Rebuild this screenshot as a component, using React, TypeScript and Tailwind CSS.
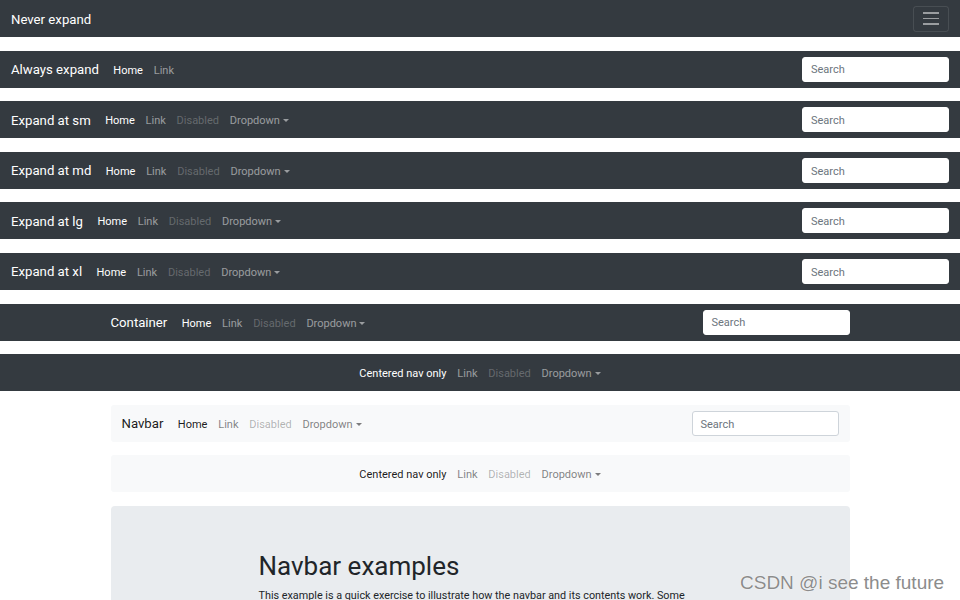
import React from 'react';

type Item = { label: string; kind: 'active' | 'link' | 'disabled' | 'dropdown' };

const full: Item[] = [
  { label: 'Home', kind: 'active' },
  { label: 'Link', kind: 'link' },
  { label: 'Disabled', kind: 'disabled' },
  { label: 'Dropdown', kind: 'dropdown' },
];

const centered: Item[] = [
  { label: 'Centered nav only', kind: 'active' },
  { label: 'Link', kind: 'link' },
  { label: 'Disabled', kind: 'disabled' },
  { label: 'Dropdown', kind: 'dropdown' },
];

const Caret = () => (
  <span className="ml-[3px] inline-block h-0 w-0 border-x-[3.5px] border-t-[3.5px] border-x-transparent border-t-current align-[2px]" />
);

const NavLinks = ({ items, dark }: { items: Item[]; dark: boolean }) => (
  <ul className="mt-[3px] flex items-center">
    {items.map((item) => {
      let color = '';
      if (item.kind === 'active') color = dark ? 'text-white' : 'text-black/90';
      else if (item.kind === 'disabled') color = dark ? 'text-white/25' : 'text-black/30';
      else color = dark ? 'text-white/50' : 'text-black/50';
      return (
        <li key={item.label} className={`px-[5.4px] text-[11px] leading-[16px] ${color}`}>
          {item.label}
          {item.kind === 'dropdown' && <Caret />}
        </li>
      );
    })}
  </ul>
);

const Search = ({ dark }: { dark: boolean }) => (
  <div
    className={`flex h-[25px] w-[147px] items-center rounded-[3px] border bg-white pl-[8px] pt-[3px] text-[11px] text-[#6c757d] ${
      dark ? 'border-white' : 'border-[#ced4da]'
    }`}
  >
    Search
  </div>
);

const Brand = ({ children, dark }: { children: React.ReactNode; dark: boolean }) => (
  <span className={`mr-[9px] mt-[2px] text-[13.2px] leading-[20px] ${dark ? 'text-white' : 'text-black/90'}`}>{children}</span>
);

const DarkBar = ({ brand, items, search = true }: { brand: string; items: Item[]; search?: boolean }) => (
  <nav className="mb-[13.6px] flex h-[37px] items-center bg-[#343a40] px-[11px]">
    <Brand dark>{brand}</Brand>
    <NavLinks items={items} dark />
    <div className="flex-1" />
    {search && <Search dark />}
  </nav>
);

export default function App() {
  return (
    <div className="relative h-[600px] w-[960px] overflow-hidden bg-white font-['Roboto','Noto_Sans',sans-serif] text-[#212529]">
      <nav className="mb-[13.6px] flex h-[37px] items-center bg-[#343a40] px-[11px]">
        <Brand dark>Never expand</Brand>
        <div className="flex-1" />
        <button className="flex h-[26px] w-[36px] flex-col items-center justify-center gap-[4px] rounded-[3px] border border-white/10">
          <span className="h-[1.5px] w-[16px] bg-white/50" />
          <span className="h-[1.5px] w-[16px] bg-white/50" />
          <span className="h-[1.5px] w-[16px] bg-white/50" />
        </button>
      </nav>

      <DarkBar brand="Always expand" items={full.slice(0, 2)} />
      <DarkBar brand="Expand at sm" items={full} />
      <DarkBar brand="Expand at md" items={full} />
      <DarkBar brand="Expand at lg" items={full} />
      <DarkBar brand="Expand at xl" items={full} />

      <nav className="mb-[13.6px] h-[37px] bg-[#343a40]">
        <div className="mx-auto flex h-full w-[739px] items-center">
          <Brand dark>Container</Brand>
          <NavLinks items={full} dark />
          <div className="flex-1" />
          <Search dark />
        </div>
      </nav>

      <nav className="mb-[13.6px] flex h-[37px] items-center justify-center bg-[#343a40]">
        <NavLinks items={centered} dark />
      </nav>

      <div className="mx-auto w-[739px]">
        <nav className="mb-[13.6px] flex h-[37px] items-center rounded-[3px] bg-[#f8f9fa] px-[11px]">
          <Brand dark={false}>Navbar</Brand>
          <NavLinks items={full} dark={false} />
          <div className="flex-1" />
          <Search dark={false} />
        </nav>

        <nav className="mb-[13.6px] flex h-[37px] items-center justify-center rounded-[3px] bg-[#f8f9fa]">
          <NavLinks items={centered} dark={false} />
        </nav>

        <div className="h-[200px] rounded-[4px] bg-[#e9ecef] pl-[148px] pt-[44px]">
          <h1 className="text-[26px] font-normal leading-[32px] text-[#212529]">Navbar examples</h1>
          <p className="mt-[6px] w-[440px] text-[10.8px] leading-[16px] text-[#212529]">
            This example is a quick exercise to illustrate how the navbar and its contents work. Some navbars extend
            the width of the viewport, others are confined within a .container.
          </p>
        </div>
      </div>

      <div className="absolute left-[740px] top-[571px] font-['Liberation_Sans',sans-serif] text-[19px] leading-[24px] text-[#8c8c8c] [text-shadow:0_0_1px_#fff,0_0_1px_#fff]">
        CSDN @i see the future
      </div>
    </div>
  );
}
